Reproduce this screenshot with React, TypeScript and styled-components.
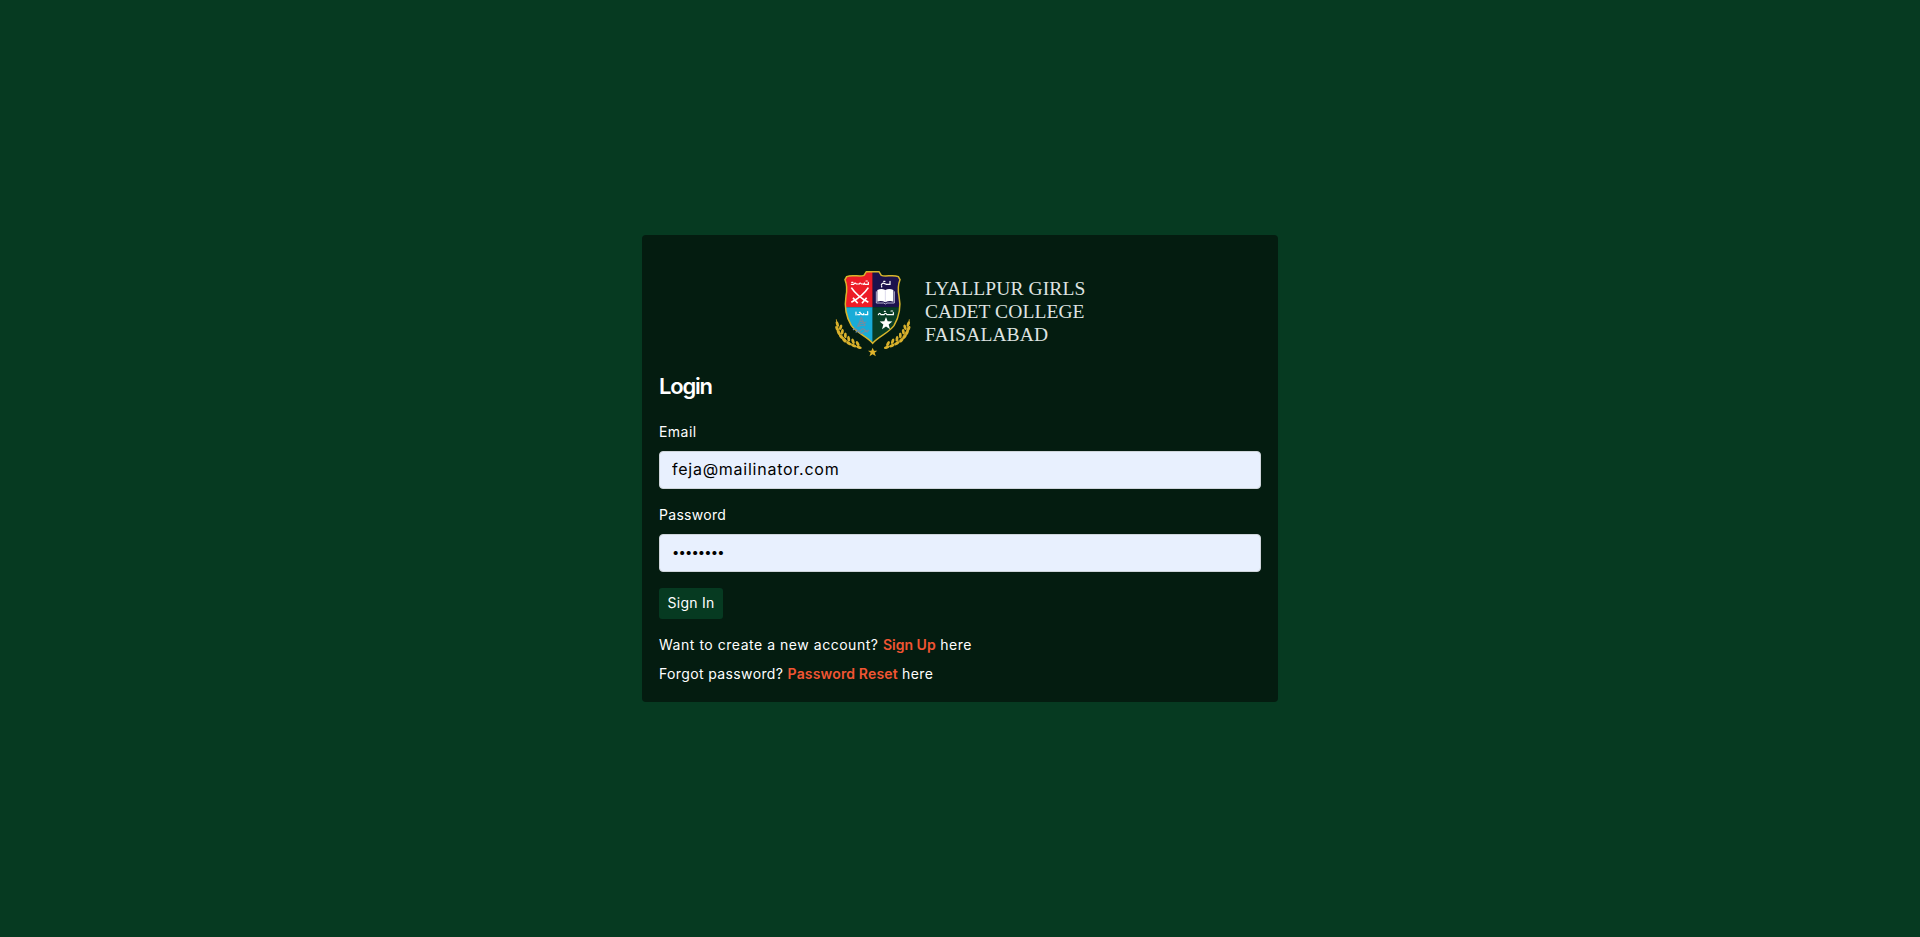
import React from "react";
import styled, { createGlobalStyle } from "styled-components";

const Global = createGlobalStyle`
  * { box-sizing: border-box; }
  body {
    margin: 0;
    background: #063a21;
    color: #fff;
    font-family: Inter, "Noto Sans", sans-serif;
    font-size: 14px;
    line-height: 19px;
  }
`;

const Page = styled.main`
  min-height: 937px;
  display: flex;
  align-items: center;
  justify-content: center;
`;

const Card = styled.section`
  width: 636px;
  height: 467px;
  padding: 27px 17px 17px;
  border-radius: 4px;
  background: #041c10;
`;

const Brand = styled.header`
  display: flex;
  justify-content: center;
  height: 100px;
  padding-right: 9px;
`;

const Crest = styled.svg`
  width: 100px;
  height: 100px;
  flex: none;
`;

const BrandName = styled.div`
  padding-top: 15px;
  width: 161px;
  font-family: "Liberation Serif", serif;
  font-size: 19.5px;
  line-height: 23px;
  letter-spacing: 0.1px;
  color: #dfe3e1;
  white-space: nowrap;
`;

const Line = styled.div``;

const Title = styled.h1`
  margin: 11px 0 23px;
  font-size: 22px;
  line-height: 26px;
  font-weight: 600;
  letter-spacing: -1.2px;
`;

const Field = styled.div`
  margin-bottom: 16px;
`;

const Label = styled.label<{ $track: number }>`
  display: block;
  margin-bottom: 10px;
  letter-spacing: ${(p) => p.$track}px;
`;

const Input = styled.input`
  display: block;
  width: 100%;
  height: 38px;
  padding: 5px 12px 7px;
  border: 1px solid #ced4da;
  border-radius: 4px;
  outline: 0;
  background: #e8f0fe;
  color: #000;
  font-family: inherit;
  font-size: 16px;
  line-height: 24px;
  letter-spacing: 0.75px;

  &[type="password"] {
    font-size: 13px;
    letter-spacing: -0.85px;
  }
`;

const Button = styled.button`
  display: block;
  width: 64px;
  height: 31px;
  margin-bottom: 16px;
  padding: 0 0 2px;
  border: 0;
  border-radius: 3px;
  background: #063a21;
  color: #fff;
  font: inherit;
  letter-spacing: 0.25px;
`;

const Note = styled.p<{ $track: number }>`
  margin: 0 0 10px;
  letter-spacing: ${(p) => p.$track}px;
`;

const Link = styled.a<{ $track?: number }>`
  color: #f15533;
  font-weight: 600;
  text-decoration: none;
  letter-spacing: ${(p) => p.$track ?? 0}px;
`;

const leaves = [
  [37, 186, 70], [36, 200, 65], [41, 212, 60], [48, 224, 50], [58, 235, 42], [71, 244, 32], [86, 251, 22],
  [47, 196, 110], [52, 209, 100], [61, 220, 92], [71, 230, 80], [84, 238, 68], [98, 245, 60], [102, 256, 15],
];

const Branch = () => (
  <g fill="#d9b12c">
    <path d="M34 172C36 212 60 244 108 258" fill="none" stroke="#c79c24" strokeWidth="3" />
    {leaves.map(([x, y, a]) => (
      <ellipse key={`${x}-${y}`} cx={x} cy={y} rx="8.5" ry="4.3" transform={`rotate(${a} ${x} ${y})`} />
    ))}
  </g>
);

const shield = "M124 29H162L169 40C182 46 204 36 220 44L225 53C219 68 218 82 222 102C228 132 224 162 207 191C190 214 160 223 143 244C126 223 96 214 79 191C62 162 58 132 63 102C67 82 66 68 60 53L65 44C82 36 104 46 117 40Z";

const Emblem = () => (
  <Crest viewBox="0 0 300 300" role="img" aria-label="College crest">
    <defs>
      <clipPath id="shield"><path d={shield} /></clipPath>
    </defs>
    <g clipPath="url(#shield)">
      <path fill="#ed1c27" d="M50 20h93v116H50z" />
      <path fill="#1c124d" d="M143 20h93v116h-93z" />
      <path fill="#18acd8" d="M50 136h93v116H50z" />
      <path fill="#083d25" d="M143 136h93v116h-93z" />
    </g>
    <path d={shield} fill="none" stroke="#d8b52b" strokeWidth="4.5" />
    <g fill="none" stroke="#fff" strokeWidth="5">
      <path d="M79 77C90 94 106 108 130 121M130 77C119 94 103 108 79 121" />
      <path d="M84 107L98 124M125 107L111 124" />
    </g>
    <path fill="#fff" d="M157 84Q169 78 181 84Q193 78 205 84V119Q193 114 181 121Q169 114 157 119Z" />
    <path d="M181 85V120M154 88V123H176L181 126L186 123H208V88" fill="none" stroke="#d5d2e8" strokeWidth="2.5" />
    <path fill="#fff" d="M183 165l5 13 14 .5-11 9 4 14-12-8-12 8 4-14-11-9 14-.5z" />
    <g fill="none" stroke="#6f8ea3" strokeWidth="3.5">
      <path d="M109 165L99 193M109 165L120 193M103 178H116M98 187L124 180M96 193L122 187" />
      <path d="M84 204q6-7 12 0t12 0t12 0t12 0M92 211q6-6 12 0t12 0t12 0" />
    </g>
    <g fill="none" stroke="#fff" strokeWidth="3.6" strokeLinecap="round">
      <path d="M79 67h7q4-7 8-1h9q2-6 6 0h6q1 3 3-2l2 3h10v-6M80 61h4M123 57h4" />
      <path d="M169 69q2-7 8-5t7 3h11v-9M176 58h4M170 72v3" />
      <path d="M93 150v9M98 158h6q3-6 7 0h5v-4M120 158h8v-9M103 151h3" />
      <path d="M160 158q4-8 8 0h9q5-8 9 0h19v-6M178 148h3M198 147h5" />
    </g>
    <Branch />
    <g transform="matrix(-1 0 0 1 287 0)"><Branch /></g>
    <path fill="#e0b42b" d="M143 257l4 9 10 .5-8 6 3.500 10-9.500-5.500-9.500 5.500 3.500-10-8-6 10-.5z" />
  </Crest>
);

export default function App() {
  return (
    <>
      <Global />
      <Page>
        <Card>
          <Brand>
            <Emblem />
            <BrandName>
              <Line>LYALLPUR GIRLS</Line>
              <Line>CADET COLLEGE</Line>
              <Line>FAISALABAD</Line>
            </BrandName>
          </Brand>
          <Title>Login</Title>
          <Field>
            <Label htmlFor="email" $track={0.45}>Email</Label>
            <Input id="email" type="email" defaultValue="feja@mailinator.com" />
          </Field>
          <Field>
            <Label htmlFor="password" $track={0.3}>Password</Label>
            <Input id="password" type="password" defaultValue="password" />
          </Field>
          <Button type="button">Sign In</Button>
          <Note $track={0.53}>
            Want to create a new account? <Link>Sign Up</Link> here
          </Note>
          <Note $track={0.37}>
            Forgot password? <Link $track={0.15}>Password Reset</Link> here
          </Note>
        </Card>
      </Page>
    </>
  );
}
